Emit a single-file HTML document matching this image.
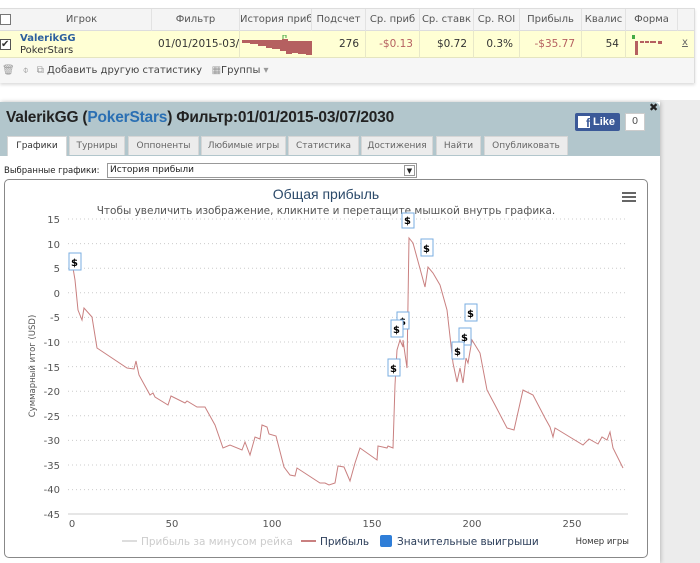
<!DOCTYPE html>
<html><head><meta charset="utf-8"><style>
*{margin:0;padding:0;box-sizing:border-box}
body{width:700px;height:563px;overflow:hidden;background:#fff;font-family:"DejaVu Sans","Liberation Sans",sans-serif;font-size:10px;color:#333;position:relative}
.a{position:absolute}
.hc{position:absolute;top:0;height:22px;line-height:22px;text-align:center;color:#555;border-right:1px solid #e2e2e2;white-space:nowrap;overflow:hidden}
.dc{position:absolute;top:0;height:27px;line-height:27px;text-align:right;padding-right:6px;border-right:1px solid #e8e8c8;white-space:nowrap;overflow:hidden;font-size:10.5px}
.tab{position:absolute;top:136px;height:19px;line-height:18px;text-align:center;background:#ececec;border:1px solid #d6d6d6;border-bottom:none;color:#666;font-size:9px}
</style></head><body>
<div class="a" style="left:0;top:8px;width:695px;height:75px;border:1px solid #ddd;box-shadow:0 2px 3px #ddd"></div>
<div class="a" style="left:0;top:9px;width:694px;height:22px;background:#f4f4f4;border-bottom:1px solid #ddd">
<div class="a" style="left:0;top:5px;width:11px;height:11px;border:1px solid #777;background:#fff"></div>
<div class="hc" style="left:12px;width:140px">Игрок</div>
<div class="hc" style="left:152px;width:88px">Фильтр</div>
<div class="hc" style="left:240px;width:72px">История прибі</div>
<div class="hc" style="left:312px;width:54px">Подсчет</div>
<div class="hc" style="left:366px;width:54px">Ср. приб</div>
<div class="hc" style="left:420px;width:54px">Ср. ставк</div>
<div class="hc" style="left:474px;width:46px">Ср. ROI</div>
<div class="hc" style="left:520px;width:62px">Прибыль</div>
<div class="hc" style="left:582px;width:44px">Квалис</div>
<div class="hc" style="left:626px;width:52px">Форма</div>
</div>
<div class="a" style="left:0;top:31px;width:694px;height:27px;background:#ffffd4;border-bottom:1px solid #e5e5c0">
<div class="a" style="left:0;top:8px;width:11px;height:11px;border:1px solid #555;background:#fff;font-size:10px;line-height:9px">✔</div>
<div class="a" style="left:20px;top:2px;font-size:10px;line-height:12px"><b style="color:#2c5f9e">ValerikGG</b><br>PokerStars</div>
<div class="dc" style="left:152px;width:88px;text-align:left;padding-left:6px">01/01/2015-03/</div>
<svg class="a" style="left:242px;top:4px" width="70" height="22"><path d="M0 5H40V4H46V6H70V20H64V19H56V18H50V19H44V16H38V14H30V13H24V11H16V9H8V8H0Z" fill="#b56060"/><path d="M41 4V0H44V3" stroke="#4a4" fill="none"/></svg>
<div class="dc" style="left:312px;width:54px">276</div>
<div class="dc" style="left:366px;width:54px;color:#b56060">-$0.13</div>
<div class="dc" style="left:420px;width:54px">$0.72</div>
<div class="dc" style="left:474px;width:46px">0.3%</div>
<div class="dc" style="left:520px;width:62px;color:#b56060">-$35.77</div>
<div class="dc" style="left:582px;width:44px">54</div>
<svg class="a" style="left:632px;top:4px" width="40" height="22"><rect x="0" y="0" width="3" height="4" fill="#4a4"/><rect x="3" y="6" width="3" height="14" fill="#b56060"/><rect x="8" y="6" width="4" height="2" fill="#b56060"/><rect x="13" y="6" width="4" height="2" fill="#b56060"/><rect x="18" y="6" width="6" height="2" fill="#b56060"/><rect x="26" y="6" width="4" height="3" fill="#b56060"/></svg>
<div class="a" style="left:682px;top:6px;color:#666;text-decoration:underline">x</div>
</div>
<div class="a" style="left:0;top:58px;width:694px;height:25px;background:#f6f6f6;color:#444;line-height:25px;font-size:10px;white-space:nowrap">
<span style="color:#999;margin-left:2px">🗑</span><span style="color:#999;margin-left:8px">⌽</span><span style="color:#999;margin-left:8px">⧉</span> Добавить другую статистику&nbsp;&nbsp;&nbsp;<span style="color:#999">▦</span>Группы <span style="color:#999">▾</span></div>

<div class="a" style="left:660px;top:100px;width:40px;height:463px;background:#ececec"></div>
<div class="a" style="left:0;top:102px;width:660px;height:461px;background:#fff;box-shadow:1px 0 4px #bbb"></div>
<div class="a" style="left:0;top:102px;width:660px;height:54px;background:#b2c6cc;border-radius:0 6px 0 0"></div>
<div class="a" style="left:6px;top:109px;font-size:15.5px;font-weight:bold;color:#222;font-family:'Liberation Sans',sans-serif;letter-spacing:-0.2px">ValerikGG (<span style="color:#2a6fb3">PokerStars</span>) Фильтр:01/01/2015-03/07/2030</div>
<div class="a" style="left:575px;top:113px;width:45px;height:18px;background:#3b5998;border-radius:2px;color:#fff;font-weight:bold;font-size:11px;line-height:18px;font-family:'Liberation Sans',sans-serif"><span style="display:inline-block;width:12px;height:12px;background:#fff;color:#3b5998;margin:3px 3px 0 3px;vertical-align:top;line-height:14px;text-align:right;font-size:12px">f</span>Like</div>
<div class="a" style="left:625px;top:113px;width:20px;height:18px;background:#fff;border:1px solid #ccc;text-align:center;line-height:16px;color:#555">0</div>
<div class="a" style="left:649px;top:101px;font-size:11px;font-weight:bold;color:#222">✖</div>
<div class="tab" style="left:7px;width:60px;background:#fff;color:#333;height:20px">Графики</div>
<div class="tab" style="left:69px;width:56px">Турниры</div>
<div class="tab" style="left:128px;width:71px">Оппоненты</div>
<div class="tab" style="left:201px;width:85px">Любимые игры</div>
<div class="tab" style="left:288px;width:71px">Статистика</div>
<div class="tab" style="left:361px;width:72px">Достижения</div>
<div class="tab" style="left:436px;width:45px">Найти</div>
<div class="tab" style="left:484px;width:84px">Опубликовать</div>
<div class="a" style="left:4px;top:166px;font-size:8.5px;color:#222">Выбранные графики:</div>
<div class="a" style="left:107px;top:163px;width:310px;height:15px;border:1px solid #999;font-size:9px;line-height:13px;padding-left:2px;color:#222">История прибыли<span style="position:absolute;right:1px;top:1px;width:11px;height:11px;border:1px solid #999;font-size:7px;line-height:10px;text-align:center">▼</span></div>
<div class="a" style="left:4px;top:179px;width:644px;height:379px;border:1px solid #888;border-radius:5px"></div>
<div class="a" style="left:0;top:186px;width:652px;text-align:center;font-size:14px;color:#2c4a6a;font-family:'Liberation Sans',sans-serif">Общая прибыль</div>
<div class="a" style="left:0;top:205px;width:652px;text-align:center;font-size:10.5px;color:#555">Чтобы увеличить изображение, кликните и перетащите мышкой внутрь графика.</div>
<div class="a" style="left:622px;top:192px;width:14px;height:2px;background:#666;box-shadow:0 4px 0 #666,0 8px 0 #666"></div>
<svg class="a" style="left:0;top:0" width="700" height="563" font-family="DejaVu Sans,sans-serif" font-size="10" fill="#555">
<g stroke="#ccc" stroke-dasharray="1,3">
<line x1="68" x2="628" y1="219" y2="219"/><line x1="68" x2="628" y1="243.6" y2="243.6"/><line x1="68" x2="628" y1="268.2" y2="268.2"/><line x1="68" x2="628" y1="292.8" y2="292.8"/><line x1="68" x2="628" y1="317.4" y2="317.4"/><line x1="68" x2="628" y1="342" y2="342"/><line x1="68" x2="628" y1="366.6" y2="366.6"/><line x1="68" x2="628" y1="391.2" y2="391.2"/><line x1="68" x2="628" y1="415.8" y2="415.8"/><line x1="68" x2="628" y1="440.4" y2="440.4"/><line x1="68" x2="628" y1="465" y2="465"/><line x1="68" x2="628" y1="489.6" y2="489.6"/>
</g>
<line x1="68" x2="628" y1="514" y2="514" stroke="#ccc"/>
<g text-anchor="end"><text x="60" y="223">15</text><text x="60" y="248">10</text><text x="60" y="272">5</text><text x="60" y="297">0</text><text x="60" y="321">-5</text><text x="60" y="346">-10</text><text x="60" y="371">-15</text><text x="60" y="395">-20</text><text x="60" y="420">-25</text><text x="60" y="444">-30</text><text x="60" y="469">-35</text><text x="60" y="493">-40</text><text x="60" y="518">-45</text></g>
<g text-anchor="middle"><text x="72" y="527">0</text><text x="172" y="527">50</text><text x="272" y="527">100</text><text x="372" y="527">150</text><text x="472" y="527">200</text><text x="572" y="527">250</text></g>
<text x="35" y="366" font-size="8.5" text-anchor="middle" transform="rotate(-90 35 366)">Суммарный итог (USD)</text>
<polyline fill="none" stroke="#c98080" stroke-width="1" points="72,262 75,280 78,310 82,320 84,308 92,317 97,348 127,368 134,369 136,361 139,375 150,395 153,393 155,397 168,405 171,396 185,403 187,401 197,407 205,407 215,425 223,448 230,445 242,450 245,442 250,455 255,437 260,439 262,425 267,427 269,434 276,436 284,467 290,475 295,476 297,468 320,483 325,483 329,485 335,483 338,466 344,467 350,481 355,463 360,448 377,460 378,446 387,448 388,446 393,448 395,385 397,350 400,340 403,347 403,340 407,368 409,238 413,243 425,287 428,267 433,273 440,285 447,310 453,363 457,382 460,368 463,383 466,358 468,363 472,340 480,353 487,390 495,405 507,428 514,430 523,390 533,395 545,418 550,427 553,437 555,428 583,445 589,439 598,444 602,437 607,440 610,432 613,448 623,468"/>
<g fill="#fff" stroke="#7aaee0" font-weight="bold" font-size="10">
<g transform="translate(69,253)"><rect width="12" height="17"/><text x="2" y="13" fill="#000" stroke="none">$</text></g>
<g transform="translate(402,213)"><rect width="12" height="15"/><text x="2" y="11" fill="#000" stroke="none">$</text></g>
<g transform="translate(421,239)"><rect width="12" height="17"/><text x="2" y="13" fill="#000" stroke="none">$</text></g>
<g transform="translate(397,312)"><rect width="12" height="17"/><text x="2" y="13" fill="#000" stroke="none">$</text></g>
<g transform="translate(391,320)"><rect width="12" height="17"/><text x="2" y="13" fill="#000" stroke="none">$</text></g>
<g transform="translate(388,359)"><rect width="12" height="17"/><text x="2" y="13" fill="#000" stroke="none">$</text></g>
<g transform="translate(465,304)"><rect width="12" height="17"/><text x="2" y="13" fill="#000" stroke="none">$</text></g>
<g transform="translate(459,328)"><rect width="12" height="17"/><text x="2" y="13" fill="#000" stroke="none">$</text></g>
<g transform="translate(452,342)"><rect width="12" height="17"/><text x="2" y="13" fill="#000" stroke="none">$</text></g>
</g>
<line x1="122" x2="137" y1="541" y2="541" stroke="#ddd" stroke-width="2"/>
<text x="141" y="545" fill="#ccc" font-size="10.5">Прибыль за минусом рейка</text>
<line x1="301" x2="316" y1="541" y2="541" stroke="#c98080" stroke-width="2"/>
<text x="320" y="545" fill="#2c3e5a" font-size="10.5">Прибыль</text>
<rect x="380" y="535" width="12" height="12" rx="2" fill="#2f7ed8"/>
<text x="397" y="545" fill="#2c3e5a" font-size="10.5">Значительные выигрыши</text>
<text x="629" y="544" fill="#333" font-size="8.5" text-anchor="end">Номер игры</text>
</svg>
</body></html>
